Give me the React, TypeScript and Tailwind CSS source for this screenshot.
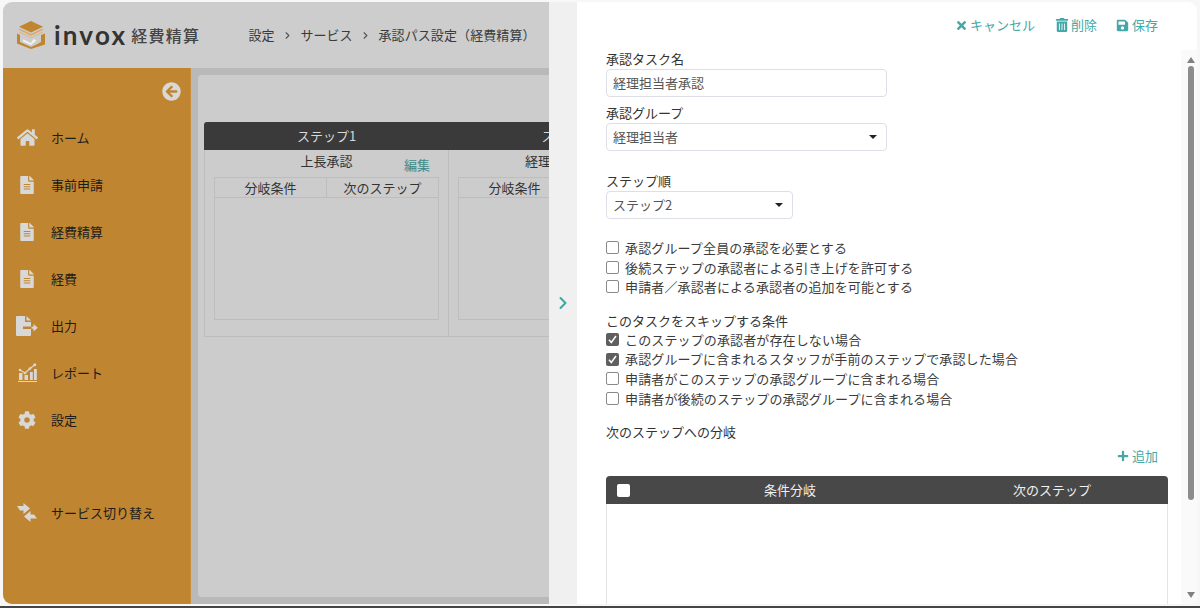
import { ChevronRight } from "lucide-react";
import { FaArrowCircleLeft, FaCog, FaFileAlt, FaHome, FaPlus, FaSave, FaTimes, FaTrashAlt } from "react-icons/fa";
import type { ReactNode } from "react";

const ExportIcon = () => (
  <svg width="22" height="20" viewBox="0 0 22 20">
    <path d="M0 1a1 1 0 0 1 1-1h8v6h6v4.500H7v2.400h8V19a1 1 0 0 1-1 1H1a1 1 0 0 1-1-1z" fill="#d8d8d8" />
    <path d="M10.500 0L15 4.600h-4.500z" fill="#d8d8d8" />
    <path d="M15.500 10.700h2V8l4.300 3.700-4.300 3.700v-2.700h-2z" fill="#d8d8d8" />
  </svg>
);

const ReportIcon = () => (
  <svg width="19" height="19" viewBox="0 0 19 19">
    <path d="M0 18h19v1H0zM1 10h3.500v7H1zM6.500 12h3.500v5H6.500zM12 9h2.800v8H12zM16 6h2.800v11H16z" fill="#d8d8d8" />
    <path d="M2 7l5 3 5-4.500L16.500 2" fill="none" stroke="#d8d8d8" strokeWidth="1.300" />
    <circle cx="2" cy="7" r="1.300" fill="#d8d8d8" />
    <circle cx="7" cy="10" r="1.300" fill="#d8d8d8" />
    <circle cx="12" cy="5.500" r="1.300" fill="#d8d8d8" />
    <circle cx="16.800" cy="1.800" r="1.500" fill="#d8d8d8" />
  </svg>
);

const SwitchIcon = () => (
  <svg width="20" height="19" viewBox="0 0 20 19">
    <path d="M0 3h6.500V0L13 5.500 6.500 11V7.500H3z" fill="#d8d8d8" />
    <path d="M20 15.500h-6.500V19L7 13.500 13.500 8v3.500H17z" fill="#d8d8d8" />
  </svg>
);

const LogoIcon = () => (
  <svg width="28" height="28" viewBox="0 0 28 28">
    <path d="M14 0l12 5.800-12 5.800L2 5.800z" fill="#c08530" />
    <path d="M3 7.800l11 5.300 11-5.300 1.500.8L14 14.800 1.500 8.600z" fill="#d8a868" />
    <path d="M3 10.600l11 5.300 11-5.300 1.500.8L14 17.600 1.500 11.400z" fill="#e0bd8d" />
    <path d="M0 12.500l3 1.500v7l11 5 5-2.300 5-2.700v-7l4-1.500v11L14 28 0 22.500z" fill="#c08530" />
    <path d="M6 18.200l8 3.800 2.500-4 3 1.500L14 24 6 20.500z" fill="#f2f2f2" />
  </svg>
);

const navItems: { label: string; icon: ReactNode }[] = [
  { label: "ホーム", icon: <FaHome size={21} color="#d8d8d8" /> },
  { label: "事前申請", icon: <FaFileAlt size={18} color="#d8d8d8" /> },
  { label: "経費精算", icon: <FaFileAlt size={18} color="#d8d8d8" /> },
  { label: "経費", icon: <FaFileAlt size={18} color="#d8d8d8" /> },
  { label: "出力", icon: <ExportIcon /> },
  { label: "レポート", icon: <ReportIcon /> },
  { label: "設定", icon: <FaCog size={18} color="#d8d8d8" /> },
];

const NavRow = ({ label, icon }: { label: string; icon: ReactNode }) => (
  <div className="flex h-[47px] items-center">
    <div className="flex w-[48px] justify-center">{icon}</div>
    <span className="text-[13px] text-[#1c1c1c]">{label}</span>
  </div>
);

const Check = ({ label, checked }: { label: string; checked?: boolean }) => (
  <div className="flex h-[19.6px] items-center">
    {checked ? (
      <span className="flex h-[13px] w-[13px] items-center justify-center rounded-[2px] bg-[#5f5f5f]">
        <svg width="9" height="9" viewBox="0 0 9 9">
          <path d="M1 4.800l2.300 2.700L8 1" fill="none" stroke="#fff" strokeWidth="1.500" />
        </svg>
      </span>
    ) : (
      <span className="h-[13px] w-[13px] rounded-[2px] border border-[#8a8a8a] bg-white" />
    )}
    <span className="ml-[6px] text-[13px] tracking-[0.13px] text-[#3c3c3c]">{label}</span>
  </div>
);

const StepCell = ({ title, className }: { title: string; className: string }) => (
  <div className={className}>
    <div className="relative h-[26px] text-center text-[13px] text-[#333]">
      {title}
      <span className="absolute top-[4px] right-[9px] text-[13px] text-[#3f8a87]">編集</span>
    </div>
    <div className="h-[143px] w-[225px] border border-[#bdbdbd]">
      <div className="flex h-[20px] border-b border-[#bdbdbd] text-[13px] leading-[19px] text-[#333]">
        <div className="w-[112px] border-r border-[#bdbdbd] text-center">分岐条件</div>
        <div className="flex-1 text-center">次のステップ</div>
      </div>
    </div>
  </div>
);

export default function App() {
  return (
    <div className="h-[608px] w-[1200px] overflow-hidden border-b-[2px] border-[#454545] bg-[#f7f7f7] pt-[2px] pr-[3px] pl-[3px] font-['Noto_Sans_CJK_JP','Noto_Sans',sans-serif]">
      <div className="flex h-[602px] overflow-hidden rounded-[9px]">
        {/* left, dimmed by the modal */}
        <div className="flex w-[546px] shrink-0 flex-col overflow-hidden">
          <div className="flex h-[66px] shrink-0 items-center bg-[#cdcdcd] pl-[14px]">
            <LogoIcon />
            <span className="ml-[9px] font-['Lato',sans-serif] text-[26px] font-bold tracking-[2.2px] text-[#333]">invox</span>
            <span className="ml-[4px] text-[16px] font-medium tracking-[1.3px] text-[#444]">経費精算</span>
            <div className="ml-[48px] flex items-center text-[13px] text-[#3a3a3a]">
              <span>設定</span>
              <ChevronRight size={11} strokeWidth={2.5} className="mx-[7.5px] text-[#555]" />
              <span>サービス</span>
              <ChevronRight size={11} strokeWidth={2.5} className="mx-[7.5px] text-[#555]" />
              <span className="tracking-[0.1px]">承認パス設定（経費精算）</span>
            </div>
          </div>
          <div className="flex min-h-0 flex-1">
            <div className="w-[188px] shrink-0 border-r border-[#c98f3a] bg-[#c08530]">
              <div className="flex h-[46px] justify-end pt-[14px] pr-[9px]">
                <FaArrowCircleLeft size={19} color="#d8d8d8" />
              </div>
              {navItems.map((n) => (
                <NavRow key={n.label} label={n.label} icon={n.icon} />
              ))}
              <div className="mt-[46px]">
                <NavRow label="サービス切り替え" icon={<SwitchIcon />} />
              </div>
            </div>
            <div className="min-w-0 flex-1 bg-[#b9b9b9] pt-[7px] pb-[7px] pl-[7px]">
              <div className="h-full overflow-hidden rounded-l-[4px] bg-[#cccccc] pt-[47px] pl-[6px]">
                <div className="flex h-[28px] w-[489px] rounded-tl-[3px] bg-[#3a3a3a] text-[13px] leading-[28px] text-[#d8d8d8]">
                  <div className="w-[245px] text-center">ステップ1</div>
                  <div className="w-[244px] text-center">ステップ2</div>
                </div>
                <div className="flex">
                  <StepCell title="上長承認" className="h-[187px] w-[245px] shrink-0 border-r border-b border-l border-[#bdbdbd] px-[9px] pt-[1px]" />
                  <StepCell title="経理担当者承認" className="h-[187px] w-[244px] shrink-0 border-r border-b border-[#bdbdbd] px-[9px] pt-[1px]" />
                </div>
              </div>
            </div>
          </div>
        </div>

        {/* slide-over panel */}
        <div className="flex min-w-0 flex-1 bg-white">
          <div className="flex w-[28px] shrink-0 items-center justify-center bg-[#f0f0f0]">
            <ChevronRight size={20} strokeWidth={2.4} className="text-[#3ba7a3]" />
          </div>
          <div className="flex min-w-0 flex-1 flex-col">
            <div className="flex h-[48px] shrink-0 items-center justify-end gap-[19px] pr-[39px] pb-[2px] text-[13px] text-[#45a8a6]">
              <span className="flex items-center gap-[2px]">
                <FaTimes size={13} />
                キャンセル
              </span>
              <span className="ml-[1px] flex items-center gap-[2px]">
                <FaTrashAlt size={14} />
                削除
              </span>
              <span className="flex items-center gap-[3px]">
                <FaSave size={13} />
                保存
              </span>
            </div>
            <div className="flex min-h-0 flex-1">
              <div className="min-w-0 flex-1 overflow-hidden pl-[29px]">
                <div className="h-[19px] text-[13px] leading-[17px] text-[#333]">承認タスク名</div>
                <div className="flex h-[28px] w-[281px] items-center rounded-[4px] border border-[#dcdfe6] px-[6px] text-[13px] text-[#555]">経理担当者承認</div>
                <div className="mt-[7px] h-[19px] text-[13px] leading-[17px] text-[#333]">承認グループ</div>
                <div className="flex h-[28px] w-[281px] items-center justify-between rounded-[4px] border border-[#dcdfe6] pr-[9px] pl-[6px] text-[13px] text-[#555]">
                  経理担当者
                  <span className="h-0 w-0 border-x-[4px] border-t-[4px] border-x-transparent border-t-[#222]" />
                </div>
                <div className="mt-[20px] h-[20px] text-[13px] leading-[20px] text-[#333]">ステップ順</div>
                <div className="flex h-[28px] w-[187px] items-center justify-between rounded-[4px] border border-[#dcdfe6] pr-[9px] pl-[6px] text-[13px] text-[#555]">
                  ステップ2
                  <span className="h-0 w-0 border-x-[4px] border-t-[4px] border-x-transparent border-t-[#222]" />
                </div>
                <div className="mt-[19px]">
                  <Check label="承認グループ全員の承認を必要とする" />
                  <Check label="後続ステップの承認者による引き上げを許可する" />
                  <Check label="申請者／承認者による承認者の追加を可能とする" />
                </div>
                <div className="mt-[14px] h-[19px] text-[13px] leading-[20px] text-[#333]">このタスクをスキップする条件</div>
                <Check checked label="このステップの承認者が存在しない場合" />
                <Check checked label="承認グループに含まれるスタッフが手前のステップで承認した場合" />
                <Check label="申請者がこのステップの承認グループに含まれる場合" />
                <Check label="申請者が後続のステップの承認グループに含まれる場合" />
                <div className="mt-[14px] h-[20px] text-[13px] leading-[20px] text-[#333]">次のステップへの分岐</div>
                <div className="flex h-[34px] w-[552px] items-center justify-end gap-[3px] pb-[7px] text-[13px] text-[#45a8a6]">
                  <FaPlus size={12} />
                  追加
                </div>
                <div className="h-[200px] w-[562px] rounded-t-[4px] border-x border-[#e4e4e4]">
                  <div className="-mx-px flex h-[28px] items-center rounded-t-[4px] bg-[#484848] text-[13px] text-[#f0f0f0]">
                    <span className="ml-[11px] h-[13px] w-[13px] rounded-[2px] bg-white" />
                    <span className="w-[320px] text-center">条件分岐</span>
                    <span className="w-[204px] text-center">次のステップ</span>
                  </div>
                </div>
              </div>
              <div className="flex w-[16px] shrink-0 flex-col items-center bg-[#fafafa] pb-[6px] pl-[4px]">
                <span className="mt-[7px] h-0 w-0 border-x-[4px] border-b-[6px] border-x-transparent border-b-[#808080]" />
                <span className="mt-[3px] h-[434px] w-[6px] rounded-full bg-[#8c8c8c]" />
                <span className="mt-auto h-0 w-0 border-x-[4px] border-t-[6px] border-x-transparent border-t-[#808080]" />
              </div>
            </div>
          </div>
        </div>
      </div>
    </div>
  );
}
